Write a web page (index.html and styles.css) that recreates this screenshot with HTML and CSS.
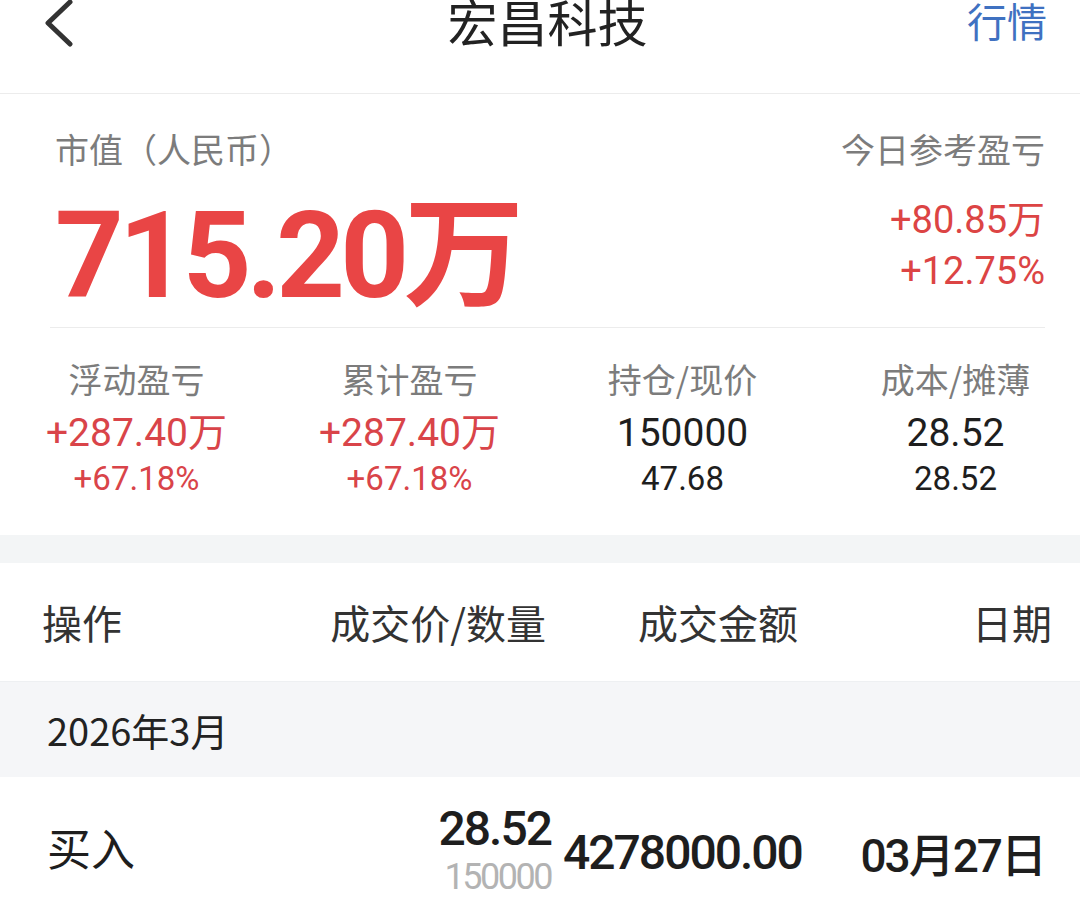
FILE: index.html
```html
<!DOCTYPE html>
<html lang="zh-CN">

<head>
    <meta charset="UTF-8">
    <meta name="viewport" content="width=device-width, initial-scale=1.0">
    <title>宏昌科技</title>
    <link rel="stylesheet" href="styles.css">
</head>

<body>
    <div class="page">
        <header class="nav">
            <a class="nav-back" href="#">
                <svg width="32" height="50" viewBox="0 0 32 50">
                    <path d="M26 2 L4 23 L26 44" fill="none" stroke="#333" stroke-width="5" stroke-linecap="round" stroke-linejoin="round" />
                </svg>
            </a>
            <h1 class="nav-title">宏昌科技</h1>
            <a class="nav-link" href="#">行情</a>
        </header>

        <section class="summary">
            <div class="summary-top">
                <div class="market-value">
                    <div class="label">市值（人民币）</div>
                    <div class="mv-amount num">715.20万</div>
                </div>
                <div class="today">
                    <div class="label">今日参考盈亏</div>
                    <div class="today-amount num">+80.85万</div>
                    <div class="today-amount num">+12.75%</div>
                </div>
            </div>

            <div class="stats">
                <div class="stat">
                    <div class="label">浮动盈亏</div>
                    <div class="stat-main num up">+287.40万</div>
                    <div class="stat-sub num up">+67.18%</div>
                </div>
                <div class="stat">
                    <div class="label">累计盈亏</div>
                    <div class="stat-main num up">+287.40万</div>
                    <div class="stat-sub num up">+67.18%</div>
                </div>
                <div class="stat">
                    <div class="label">持仓/现价</div>
                    <div class="stat-main num">150000</div>
                    <div class="stat-sub num">47.68</div>
                </div>
                <div class="stat">
                    <div class="label">成本/摊薄</div>
                    <div class="stat-main num">28.52</div>
                    <div class="stat-sub num">28.52</div>
                </div>
            </div>
        </section>

        <div class="band"></div>

        <div class="trade-head">
            <div>操作</div>
            <div class="col-price">成交价/数量</div>
            <div class="col-amount">成交金额</div>
            <div class="col-date">日期</div>
        </div>

        <div class="month">2026年3月</div>

        <div class="trade-row">
            <div class="trade-type">买入</div>
            <div class="col-price">
                <div class="price num">28.52</div>
                <div class="qty num">150000</div>
            </div>
            <div class="col-amount num">4278000.00</div>
            <div class="col-date num">03月27日</div>
        </div>
    </div>
</body>

</html>
```

FILE: styles.css
```css
body {
    margin: 0;
    background: #fff;
    color: #222;
    font-family: "Noto Sans CJK SC", sans-serif;
}

.page {
    width: 1080px;
    height: 910px;
    overflow: hidden;
}

.num {
    font-family: Roboto, "Noto Sans CJK SC", sans-serif;
}

/* top bar */
.nav {
    display: grid;
    grid-template-columns: 1fr auto 1fr;
    align-items: start;
    height: 93px;
    padding: 0 33px 0 44px;
    border-bottom: 1px solid #ececec;
}

.nav-back {
    display: block;
    width: 32px;
    height: 50px;
}

.nav-title {
    margin: -5px 0 0 4px;
    font-size: 50px;
    line-height: 50px;
    font-weight: 400;
    color: #222;
}

.nav-link {
    justify-self: end;
    font-size: 40px;
    line-height: 40px;
    color: #3f71c1;
    text-decoration: none;
}

/* summary */
.summary {
    padding: 0 35px 0 50px;
}

.summary-top {
    display: flex;
    justify-content: space-between;
    align-items: flex-start;
    padding: 35px 0 11px 5px;
    border-bottom: 1px solid #ececec;
}

.label {
    font-size: 34px;
    line-height: 40px;
    color: #7c7c7c;
}

.mv-amount {
    margin-top: 27px;
    font-size: 120px;
    line-height: 120px;
    font-weight: 700;
    letter-spacing: -5px;
    color: #e94545;
}

.today {
    text-align: right;
}

.today .label {
    margin-bottom: 26px;
}

.today-amount {
    font-size: 38px;
    line-height: 51px;
    color: #dc4444;
}

.stats {
    display: grid;
    grid-template-columns: repeat(4, 273px);
    margin: 0 -35px 0 -50px;
    padding: 31px 0 34px;
}

.stat {
    text-align: center;
}

.stat .label {
    margin-bottom: 10px;
}

.stat-main {
    font-size: 39px;
    line-height: 48px;
    color: #1e1e1e;
}

.stat-sub {
    font-size: 33px;
    line-height: 44px;
    color: #1e1e1e;
}

.up {
    color: #d94449;
}

.band {
    height: 28px;
    background: #f3f5f6;
}

/* trades */
.trade-head,
.trade-row {
    display: grid;
    grid-template-columns: 250px 254px 274px 1fr;
    align-items: center;
    padding: 0 28px 0 42px;
}

.trade-head {
    height: 118px;
    font-size: 40px;
    color: #333;
}

.trade-head .col-price {
    text-align: right;
}

.trade-head .col-amount {
    padding-left: 92px;
}

.trade-head .col-date {
    text-align: right;
}

.month {
    height: 95px;
    padding-left: 47px;
    display: flex;
    align-items: center;
    background: #f5f6f8;
    border-top: 1px solid #eef0f2;
    font-size: 38px;
    color: #222;
}

.trade-row {
    height: 140px;
    padding: 0 35px 0 47px;
    color: #1e1e1e;
}

.trade-type {
    font-size: 44px;
}

.trade-row .col-price {
    padding-top: 6px;
    text-align: right;
}

.price {
    font-size: 48px;
    line-height: 52px;
    font-weight: 500;
    letter-spacing: -2px;
}

.qty {
    margin-top: 2px;
    font-size: 36px;
    line-height: 40px;
    letter-spacing: -2.5px;
    color: #b3b3b3;
}

.trade-row .col-amount {
    padding: 10px 0 0 12px;
    font-size: 48px;
    font-weight: 500;
    letter-spacing: -2px;
}

.trade-row .col-date {
    padding-top: 10px;
    text-align: right;
    font-size: 46px;
    font-weight: 500;
    letter-spacing: -2px;
}
```
